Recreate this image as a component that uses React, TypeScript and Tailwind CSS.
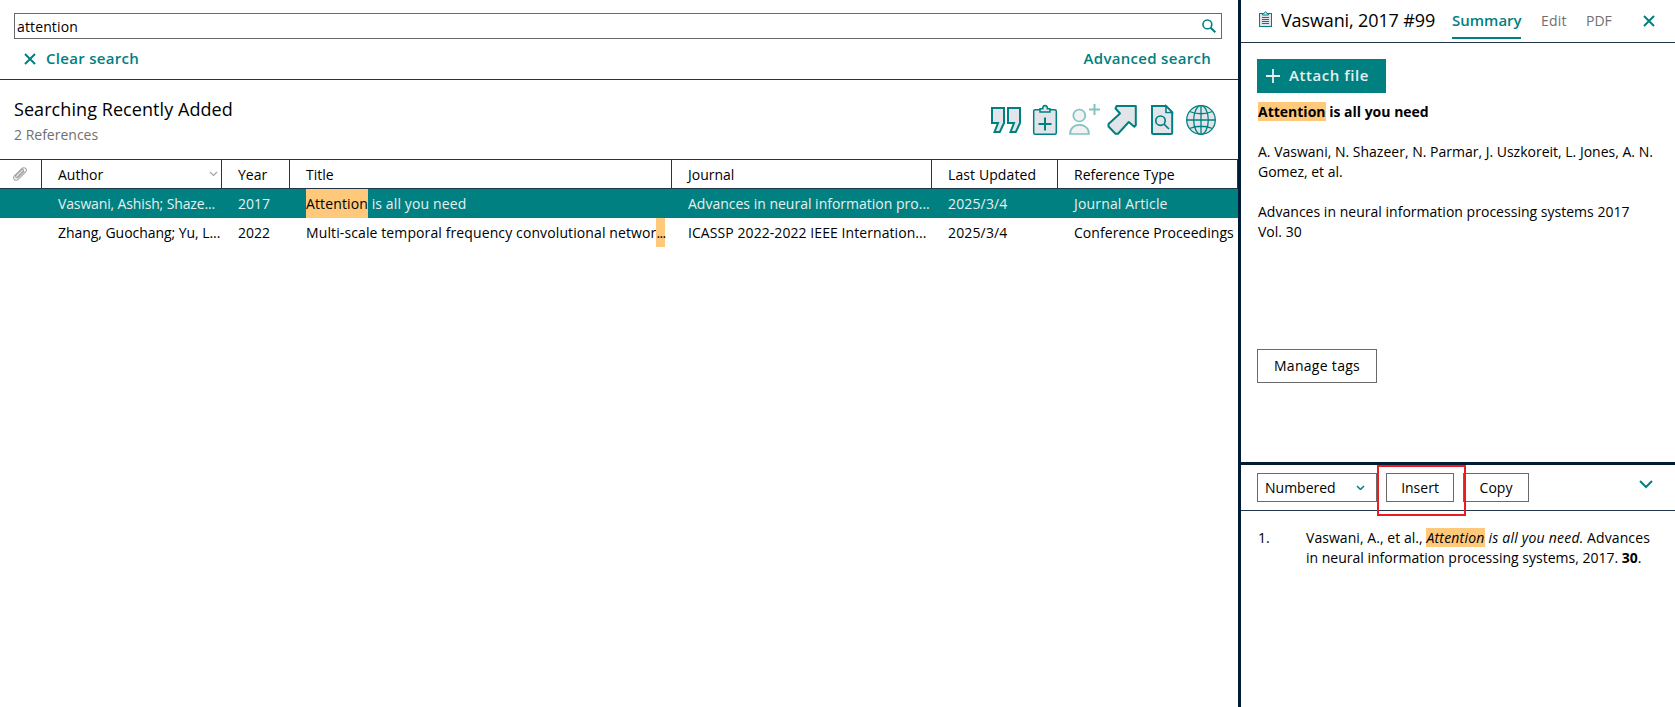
import React from "react";

const teal = "#008080";
const fill = "#e1e4e8";

function ToolbarIcons() {
  return (
    <svg width="228" height="34" viewBox="0 0 228 34" fill={fill} stroke={teal} strokeWidth="2">
      <path d="M3 6H15V21L10.8 30H5.5L9 21H3Z" />
      <path d="M19 6H31V21L26.8 30H21.5L25 21H19Z" />
      <g strokeWidth="1.5">
        <rect x="44.7" y="7.7" width="22.6" height="24.5" rx="1.5" />
        <path d="M51 10V6.7H53.7C53.7 2.3 58.4 2.3 58.4 6.7H61V10Z" />
        <path d="M56 15.5V28.5M49.5 22H62.5" strokeWidth="2" />
      </g>
      <g strokeWidth="1.7" opacity="0.48">
        <circle cx="90.3" cy="13.5" r="6" />
        <path d="M81 32C81 19.8 100 19.8 100 32Z" />
        <path d="M105.5 2V13M100 7.5H111" strokeWidth="2" />
      </g>
      <path d="M127.6 4H146.8V23.2L145.3 24.7L139.8 20L129 31.8H126.5L119.5 24.5V22L131 11.5L126.5 6.5Z" strokeLinejoin="round" />
      <path d="M163 4H177L183.2 10.2V30.5Q183.2 32 181.7 32H164.5Q163 32 163 30.5V4Z" />
      <path d="M177 4V10.5H183Z" fill="#fff" strokeWidth="1.6" />
      <g strokeWidth="1.7">
        <circle cx="171.5" cy="18.7" r="4.7" />
        <path d="M175 22.2L180 27" />
      </g>
      <g strokeWidth="1.3">
        <circle cx="212" cy="18" r="14.3" />
        <ellipse cx="212" cy="18" rx="7.3" ry="14.3" />
        <path d="M212 3.7V32.3M197.7 18H226.3M200.5 9.5Q212 14 223.5 9.5M200.5 26.5Q212 22 223.5 26.5" fill="none" />
      </g>
    </svg>
  );
}

function Cross() {
  return (
    <svg width="12" height="12" viewBox="0 0 12 12" fill="none" stroke={teal} strokeWidth="2">
      <path d="M1 1L11 11M11 1L1 11" />
    </svg>
  );
}

function Chevron({ width, color, stroke }: { width: number; color: string; stroke: number }) {
  return (
    <svg width={width} height={width * 0.65} viewBox={`0 0 ${width} ${width * 0.65}`} fill="none" stroke={color} strokeWidth={stroke}>
      <path d={`M1 1L${width / 2} ${width * 0.5}L${width - 1} 1`} />
    </svg>
  );
}

function Mark({ children }: { children: React.ReactNode }) {
  return <span className="bg-[#ffc97c] text-black">{children}</span>;
}

const cols = "grid grid-cols-[42px_180px_68px_382px_260px_126px_180px]";
const head = "flex items-center border-r border-[#22364a] pl-4";
const cell = "flex items-center overflow-hidden whitespace-pre pl-4";

function LibraryPane() {
  return (
    <main className="flex w-[1238px] shrink-0 flex-col">
      <section className="h-20 border-b border-[#22364a] pt-[13px]">
        <div className="ml-[14px] flex h-[26px] w-[1208px] items-center justify-between border border-[#6a6a6a] pl-[2px] pr-[5px]">
          <span className="tracking-[0.13px]">attention</span>
          <svg width="14" height="14" viewBox="0 0 14 14" fill="none" stroke={teal} strokeWidth="1.6">
            <circle cx="5.4" cy="5.4" r="4.4" />
            <path d="M8.7 8.7L13.3 13.3" strokeWidth="2" />
          </svg>
        </div>
        <div className="flex h-[39px] items-center justify-between pl-6 pr-[27px] text-[15px] font-semibold text-[#008080]">
          <div className="flex items-center gap-[10px]">
            <Cross />
            <span className="pb-[1px] tracking-[0.3px]">Clear search</span>
          </div>
          <span className="pb-[1px] tracking-[0.3px]">Advanced search</span>
        </div>
      </section>
      <section className="flex h-[79px] justify-between pl-[14px] pr-[21px]">
        <div className="pt-[16px]">
          <h1 className="text-[18px] leading-[26px] tracking-[0.07px]">Searching Recently Added</h1>
          <p className="leading-[25px] text-[#707070]">2 References</p>
        </div>
        <div className="pt-[22px]"><ToolbarIcons /></div>
      </section>
      <div className={cols + " h-[30px] border-y border-[#22364a]"}>
        <div className="flex items-center border-r border-[#22364a] pl-[13px]">
          <svg width="14" height="14" viewBox="0 0 14 14" fill="none" stroke="#a5a5a5" strokeWidth="1.1">
            <path d="M3 7.4L8.2 2.1Q10.5 0 12.5 1.2Q14.3 3 12.5 5.2L5.5 12.2Q3.6 14 1.6 12.8Q-.3 11 1.3 9L7.4 3.5M4 10.3L10 4.2Q11 3 10 2.5Q9.4 2 8.5 3L3.3 8.1Q2.2 9.7 3.1 10.6Q4 11.3 5.4 10L11.3 4" />
          </svg>
        </div>
        <div className={head + " justify-between pr-[3px]"}>
          <span>Author</span>
          <Chevron width={9} color="#a5a5a5" stroke={1.2} />
        </div>
        <div className={head}>Year</div>
        <div className={head}>Title</div>
        <div className={head}>Journal</div>
        <div className={head + " tracking-[0.1px]"}>Last Updated</div>
        <div className={head}>Reference Type</div>
      </div>
      <div className={cols + " h-[29px] bg-[#008080] text-[#e7efef]"}>
        <div />
        <div className={cell + " tracking-[-0.14px]"}>Vaswani, Ashish; Shaze...</div>
        <div className={cell}>2017</div>
        <div className={cell + " tracking-[0.12px]"}>
          <span className="flex h-full items-center bg-[#ffc97c] text-black">Attention</span> is all you need
        </div>
        <div className={cell}>Advances in neural information pro...</div>
        <div className={cell + " tracking-[0.15px]"}>2025/3/4</div>
        <div className={cell + " tracking-[0.16px]"}>Journal Article</div>
      </div>
      <div className={cols + " h-[29px]"}>
        <div />
        <div className={cell + " tracking-[-0.05px]"}>Zhang, Guochang; Yu, L...</div>
        <div className={cell}>2022</div>
        <div className={cell + " tracking-[0.11px]"}>
          Multi-scale temporal frequency convolutional networ<span className="flex h-full w-[9px] items-center bg-[#ffc97c] tracking-[-0.7px]">...</span>
        </div>
        <div className={cell + " tracking-[0.07px]"}>ICASSP 2022-2022 IEEE Internation...</div>
        <div className={cell + " tracking-[0.15px]"}>2025/3/4</div>
        <div className={cell + " tracking-[0.05px]"}>Conference Proceedings</div>
      </div>
    </main>
  );
}

function DetailPane() {
  return (
    <aside className="flex min-w-0 flex-1 flex-col border-l-[3px] border-[#001b36]">
      <header className="flex h-[43px] shrink-0 items-center border-b border-[#22364a] pb-[1px] pl-[18px]">
        <svg className="mb-[3px]" width="13" height="17" viewBox="0 0 13 17" fill={fill} stroke={teal} strokeWidth="1">
          <rect x=".5" y="2.5" width="12" height="13" />
          <path d="M3.5 4V2.5H5Q6.5 -1 8 2.5H9.5V4Z" />
          <path d="M3 6.5H10M3 8.5H10M3 10.5H10M3 12.5H10" />
        </svg>
        <span className="mb-[1px] ml-[9px] w-[171px] whitespace-nowrap text-[18px] tracking-[-0.12px]">Vaswani, 2017 #99</span>
        <span className="mt-[2px] h-[34px] w-[69px] border-b-2 border-[#008080] pt-[2px] text-[15px] font-semibold leading-[26px] text-[#008080]">Summary</span>
        <span className="mb-[1px] ml-[20px] w-[45px] tracking-[0.2px] text-[#707070]">Edit</span>
        <span className="mb-[1px] w-[57px] text-[#707070]">PDF</span>
        <Cross />
      </header>
      <section className="flex h-[419px] shrink-0 flex-col items-start pl-4 pt-4">
        <button className="flex h-[34px] w-[129px] items-center gap-[9px] bg-[#008080] pl-[9px] text-[15px] font-semibold text-[#e7efef]">
          <svg width="14" height="14" viewBox="0 0 14 14" stroke="#e7efef" strokeWidth="1.8"><path d="M7 0V14M0 7H14" /></svg>
          <span className="pb-[2px] tracking-[0.55px]">Attach file</span>
        </button>
        <div className="ml-[1px] mt-[9px] leading-[20px]">
          <p className="font-bold"><Mark>Attention</Mark> is all you need</p>
          <p className="mt-5 whitespace-nowrap">A. Vaswani, N. Shazeer, N. Parmar, J. Uszkoreit, L. Jones, A. N.<br />Gomez, et al.</p>
          <p className="mt-5 whitespace-nowrap tracking-[0.02px]">Advances in neural information processing systems 2017<br />Vol. 30</p>
        </div>
        <button className="mt-[107px] h-[34px] w-[120px] border border-[#6a6a6a] pb-[2px] tracking-[0.3px]">Manage tags</button>
      </section>
      <section className="relative flex h-[49px] shrink-0 items-center border-b border-t-[3px] border-b-[#22364a] border-t-[#001b36] pl-4">
        <button className="flex h-[29px] w-[120px] items-center justify-between border border-[#6a6a6a] pl-[7px] pr-[11px]">
          <span>Numbered</span>
          <Chevron width={9} color={teal} stroke={1.5} />
        </button>
        <button className="ml-[9px] h-[29px] w-[68px] border border-[#6a6a6a]">Insert</button>
        <button className="ml-[9px] mr-[110px] h-[29px] w-[66px] border border-[#6a6a6a]">Copy</button>
        <span className="mb-[5px]"><Chevron width={14} color={teal} stroke={2} /></span>
        <div className="absolute left-[136px] top-0 h-[51px] w-[89px] border-2 border-[#ed1c24]" />
      </section>
      <section className="flex pl-[17px] pt-[17px] leading-[20px]">
        <span className="w-12">1.</span>
        <p className="whitespace-nowrap"><span className="tracking-[0.05px]">Vaswani, A., et al., </span><i className="tracking-[0.22px]"><Mark>Attention</Mark> is all you need.</i> <span className="tracking-[0.1px]">Advances</span><br />in neural information processing systems, 2017. <b>30</b>.</p>
      </section>
    </aside>
  );
}

export default function App() {
  return (
    <div className="flex h-[707px] w-[1675px] overflow-hidden bg-white font-['Open_Sans',sans-serif] text-[14px] text-black">
      <LibraryPane />
      <DetailPane />
    </div>
  );
}
